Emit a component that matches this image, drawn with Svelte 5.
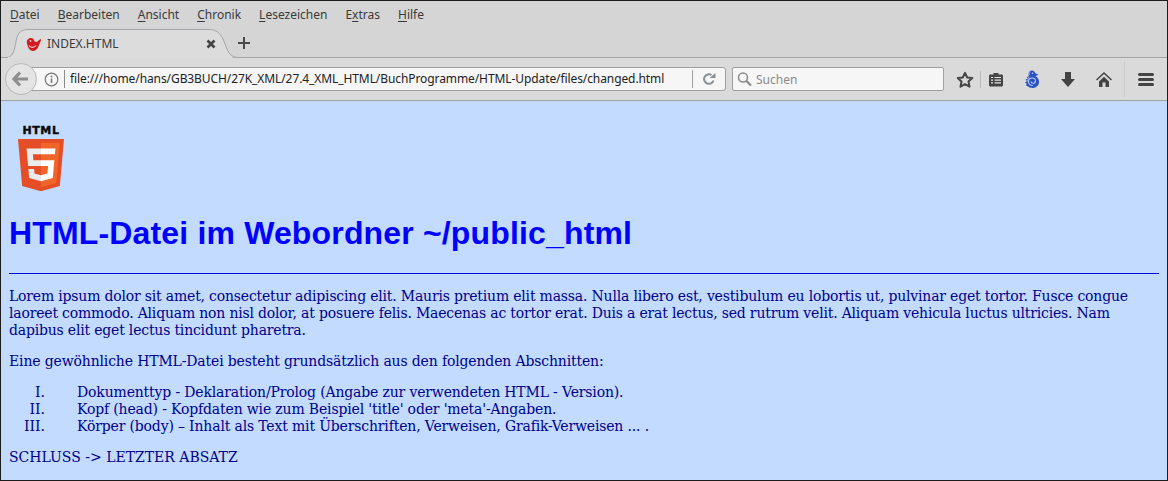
<script>
	const menus = [
		{ key: 'D', rest: 'atei' },
		{ key: 'B', rest: 'earbeiten' },
		{ key: 'A', rest: 'nsicht' },
		{ key: 'C', rest: 'hronik' },
		{ key: 'L', rest: 'esezeichen' },
		{ pre: 'E', key: 'x', rest: 'tras' },
		{ key: 'H', rest: 'ilfe' }
	];

	const items = [
		"Dokumenttyp - Deklaration/Prolog (Angabe zur verwendeten HTML - Version).",
		"Kopf (head) - Kopfdaten wie zum Beispiel 'title' oder 'meta'-Angaben.",
		"Körper (body) – Inhalt als Text mit Überschriften, Verweisen, Grafik-Verweisen ... ."
	];
</script>

<div class="window">
	<nav class="menubar">
		{#each menus as m}
			<span class="menu">{m.pre ?? ''}<u>{m.key}</u>{m.rest}</span>
		{/each}
	</nav>

	<div class="tabbar">
		<div class="tab">
			<svg class="tab-shape" width="242" height="30" viewBox="0 0 242 30">
				<path d="M0 28.500H6C11 28.500 13 25 14.500 20L16.500 10C18 4 21 .5 28 .5H209C216 .5 220 4 223 10L227 20C229 25 232 28.500 239 28.500H242" fill="#dcdcdc" stroke="#a2a6aa" />
				<rect x="8" y="28" width="224" height="2" fill="#dcdcdc" />
			</svg>
			<svg class="favicon" width="15" height="13" viewBox="0 0 15 13">
				<path d="M1 5C0 2 3 0 5 0 7 0 8 1.500 8.500 3.500L11 4C12 3 13.500 1.500 15 1 15 3 14 5 13 6.500 12.500 10 10 13 7 13 3.500 13 1.500 9 1 5z" fill="#cf1a1f" />
				<circle cx="4.500" cy="3" r=".9" fill="#f5d0d0" />
				<path d="M3 7.500C4.500 10 8 10 10 7.500" fill="none" stroke="#f5d0d0" stroke-width="1.200" />
			</svg>
			<span class="tab-title">INDEX.HTML</span>
			<svg class="tab-close" width="10" height="10" viewBox="0 0 10 10">
				<path d="M1.500 1.500l7 7M8.500 1.500l-7 7" stroke="#444" stroke-width="2.600" />
			</svg>
		</div>
		<svg class="new-tab" width="14" height="14" viewBox="0 0 14 14">
			<path d="M7 1v12M1 7h12" stroke="#4a4a4a" stroke-width="2" />
		</svg>
	</div>

	<div class="navbar">
		<div class="urlbar">
			<svg class="info" width="15" height="15" viewBox="0 0 15 15">
				<circle cx="7.500" cy="7.500" r="6.300" fill="none" stroke="#777" stroke-width="1.200" />
				<path d="M7.500 6.500v4.500" stroke="#777" stroke-width="1.500" />
				<circle cx="7.500" cy="4.500" r="1" fill="#777" />
			</svg>
			<span class="url">file:///home/hans/GB3BUCH/27K_XML/27.4_XML_HTML/BuchProgramme/HTML-Update/files/changed.html</span>
			<span class="reload">
				<svg width="14" height="14" viewBox="0 0 14 14">
					<path d="M11.500 8.500A4.800 4.800 0 1 1 9.500 3" fill="none" stroke="#8a9198" stroke-width="2" />
					<path d="M7.500 6h6V1z" fill="#8a9198" />
				</svg>
			</span>
		</div>
		<div class="back">
			<svg width="18" height="16" viewBox="0 0 18 16">
				<path d="M8 1.500L2 8l6 6.500M2.500 8H16" fill="none" stroke="#8e8e8e" stroke-width="3.200" />
			</svg>
		</div>
		<div class="search">
			<svg width="15" height="16" viewBox="0 0 15 16">
				<circle cx="6" cy="6.500" r="4.500" fill="none" stroke="#8a8a8a" stroke-width="1.500" />
				<path d="M9.500 10l4.500 4.500" stroke="#8a8a8a" stroke-width="2.200" />
			</svg>
			<span>Suchen</span>
		</div>
		<div class="tools">
			<span class="slot">
				<svg width="18" height="17" viewBox="0 0 18 17">
					<path d="M9 1.800l2.200 4.700 5.100.6-3.800 3.500 1 5.100L9 13.200l-4.500 2.500 1-5.100-3.800-3.500 5.100-.6z" fill="none" stroke="#444" stroke-width="2" stroke-linejoin="round" />
				</svg>
			</span>
			<span class="sep"></span>
			<span class="slot">
				<svg width="16" height="15" viewBox="0 0 16 15">
					<path d="M2 2.500h3.500V1h5v1.500H14a1.500 1.500 0 0 1 1 1.500v9a1.500 1.500 0 0 1-1 1.500H2A1.500 1.500 0 0 1 1 13V4a1.500 1.500 0 0 1 1-1.500z" fill="#444" />
					<path d="M3 5.500h2M6.500 5.500H13M3 8.200h2M6.500 8.200H13M3 10.900h2M6.500 10.900H13" stroke="#e4e4e4" stroke-width="1.200" />
				</svg>
			</span>
			<span class="slot spaced">
				<svg width="14" height="18" viewBox="0 0 14 18">
					<path d="M3.500 4.500C3.500 2 5 .5 7 .5 8.500.5 9.800 1.500 10 3L13.500 4.800 10.500 6C12.800 7.500 14 9.500 14 12 14 15.500 11 18 7.500 18 5.500 18 3.500 17.300 2.500 16L.8 15.500 1.800 13.800 0 12.500 1.800 11 .5 9.300 2.800 8.800 1.800 6.800 4 6.500z" fill="#2a52c4" />
					<path d="M4 6.500L2 12M5 1.500L4 5" stroke="#7f9ce6" stroke-width="1" fill="none" />
					<path d="M8 15.500C5 15.500 3.500 13.500 3.500 11.500S5 8 7.200 8 10.500 9.500 10.500 11 9.300 13.300 8 13.300 6.200 12.500 6.200 11.500" fill="none" stroke="#b9caf4" stroke-width="1.100" />
					<circle cx="7.500" cy="3.200" r=".8" fill="#b9caf4" />
				</svg>
			</span>
			<span class="slot spaced">
				<svg width="14" height="15" viewBox="0 0 14 15">
					<path d="M4 0h6v7h4l-7 8-7-8h4z" fill="#444" />
				</svg>
			</span>
			<span class="slot spaced">
				<svg width="16" height="15" viewBox="0 0 16 15">
					<path d="M8 0L0 7.500l1 1L8 2l7 6.500 1-1z" fill="#444" />
					<path d="M3 9.500l5-4.700 5 4.700V15H9.500v-4.500h-3V15H3z" fill="#444" />
				</svg>
			</span>
			<span class="sep tall"></span>
			<span class="slot">
				<svg width="16" height="13" viewBox="0 0 16 13">
					<path d="M1.500 1.500h13M1.500 6.500h13M1.500 11.500h13" stroke="#444" stroke-width="3" stroke-linecap="round" />
				</svg>
			</span>
		</div>
	</div>

	<main class="page">
		<svg class="logo" width="46" height="66" viewBox="0 0 46 66">
			<text x="23" y="9" text-anchor="middle" class="logo-text">HTML</text>
			<g transform="translate(0 14) scale(.102) translate(-30 0)">
				<path d="M71 460L30 0H481L440 460 255 512z" fill="#e44d26" />
				<path d="M256 472L405 431 440 37H256z" fill="#f16529" />
				<path d="M256 208H181L176 150H256V94H114L115 109 129 265H256zM256 355H255L192 338 188 293H132L139 382 255 414H256z" fill="#ebebeb" />
				<path d="M255 208V265H325L318 338 255 355V414L371 382 372 372 385 223 387 208H371zM255 94V150H392L393 138 396 109 397 94z" fill="#fff" />
			</g>
		</svg>
		<h1>HTML-Datei im Webordner ~/public_html</h1>
		<hr />
		<p class="intro">Lorem ipsum dolor sit amet, consectetur adipiscing elit. Mauris pretium elit massa. Nulla libero est, vestibulum eu lobortis ut, pulvinar eget tortor. Fusce congue laoreet commodo. Aliquam non nisl dolor, at posuere felis. Maecenas ac tortor erat. Duis a erat lectus, sed rutrum velit. Aliquam vehicula luctus ultricies. Nam dapibus elit eget lectus tincidunt pharetra.</p>
		<p>Eine gewöhnliche HTML-Datei besteht grundsätzlich aus den folgenden Abschnitten:</p>
		<ol>
			{#each items as item}
				<li>{item}</li>
			{/each}
		</ol>
		<p class="last">SCHLUSS -&gt; LETZTER ABSATZ</p>
	</main>
</div>

<style>
	:global(body) {
		margin: 0;
		background: #c2dbfe;
	}

	.window {
		width: 1168px;
		height: 481px;
		box-sizing: border-box;
		border: 1px solid #1c1c1c;
		display: flex;
		flex-direction: column;
		overflow: hidden;
		font-family: "Noto Sans", sans-serif;
		font-size: 12px;
		color: #3a3a3a;
	}

	.menubar {
		height: 26px;
		flex: none;
		display: flex;
		align-items: center;
		gap: 18px;
		padding-left: 9px;
		background: #d5d5d5;
	}

	.menu u {
		text-underline-offset: 2px;
	}

	.tabbar {
		height: 31px;
		flex: none;
		display: flex;
		align-items: flex-end;
		background: #d5d5d5;
		border-bottom: 1px solid #a4a4a4;
		box-sizing: border-box;
	}

	.tab {
		position: relative;
		width: 232px;
		height: 29px;
		flex: none;
		display: flex;
		align-items: center;
		margin-bottom: -1px;
		padding-left: 25px;
		box-sizing: border-box;
	}

	.tab-shape {
		position: absolute;
		left: -1px;
		top: 0;
	}

	.favicon {
		position: relative;
		flex: none;
		margin-top: 1px;
	}

	.tab-title {
		position: relative;
		margin-left: 6px;
		font-size: 12px;
	}

	.tab-close {
		position: absolute;
		left: 205px;
		top: 10px;
	}

	.new-tab {
		margin: 0 0 7px 4px;
	}

	.navbar {
		position: relative;
		height: 43px;
		flex: none;
		display: flex;
		align-items: center;
		box-sizing: border-box;
		background: #dadada;
		border-bottom: 1px solid #a0a0a0;
	}

	.back {
		position: absolute;
		left: 4px;
		top: 5px;
		width: 30px;
		height: 30px;
		border: 1px solid #b8b8b8;
		border-radius: 50%;
		background: #e4e4e4;
		display: flex;
		align-items: center;
		justify-content: center;
	}

	.urlbar {
		margin-left: 19px;
		width: 706px;
		height: 24px;
		flex: none;
		box-sizing: border-box;
		border: 1px solid #a0a0a0;
		border-radius: 0 3px 3px 0;
		background: #f6f6f6;
		display: flex;
		align-items: center;
		padding-left: 23px;
	}

	.info {
		margin-right: 5px;
		flex: none;
	}

	.url {
		border-left: 1px solid #8c8c8c;
		padding-left: 5px;
		color: #222;
		line-height: 18px;
		letter-spacing: -0.09px;
		flex: 1;
		white-space: nowrap;
	}

	.reload {
		display: flex;
		border-left: 1px solid #a0a0a0;
		padding: 2px 9px;
		flex: none;
	}

	.search {
		margin-left: 6px;
		width: 212px;
		height: 24px;
		flex: none;
		box-sizing: border-box;
		border: 1px solid #a0a0a0;
		border-radius: 2px;
		background: #f6f6f6;
		display: flex;
		align-items: center;
		gap: 4px;
		padding-left: 4px;
		color: #8a8a8a;
	}

	.tools {
		display: flex;
		align-items: center;
		margin-left: 6px;
	}

	.slot {
		width: 30px;
		display: flex;
		justify-content: center;
		align-items: center;
	}

	.slot.spaced {
		margin-left: 6px;
	}

	.sep {
		width: 1px;
		height: 17px;
		background: #b8b8b8;
	}

	.sep.tall {
		height: 36px;
		margin: 0 6px 0 5px;
		background: #cbcbcb;
	}

	.page {
		flex: 1;
		padding: 0 8px;
		background: #c2dbfe;
		color: #00008b;
		font-family: "DejaVu Serif", serif;
		font-size: 14px;
		line-height: 17px;
		letter-spacing: -0.15px;
	}

	.logo {
		display: block;
		margin: 24px 0 0 9px;
	}

	.logo-text {
		font-family: "DejaVu Sans", sans-serif;
		font-weight: 700;
		font-size: 11px;
		letter-spacing: 0.6px;
		fill: #0a0a0a;
		stroke: #0a0a0a;
		stroke-width: 0.4px;
	}

	h1 {
		margin: 24px 0 0;
		font-family: "Liberation Sans", sans-serif;
		font-size: 32px;
		line-height: 37px;
		font-weight: 700;
		letter-spacing: 0.16px;
		color: #0000ff;
	}

	hr {
		margin: 21px 0 0;
		border: 0;
		border-top: 1px solid #0000d8;
	}

	p {
		margin: 14px 0 0;
	}

	p.intro {
		letter-spacing: -0.19px;
	}

	p.last {
		letter-spacing: 0;
	}

	ol {
		margin: 14px 0 0;
		padding: 0;
		list-style: none;
		counter-reset: item;
		letter-spacing: -0.16px;
	}

	li {
		display: flex;
		counter-increment: item;
	}

	li::before {
		content: counter(item, upper-roman) ".";
		flex: none;
		width: 36px;
		margin-right: 32px;
		text-align: right;
		letter-spacing: 0;
	}
</style>
